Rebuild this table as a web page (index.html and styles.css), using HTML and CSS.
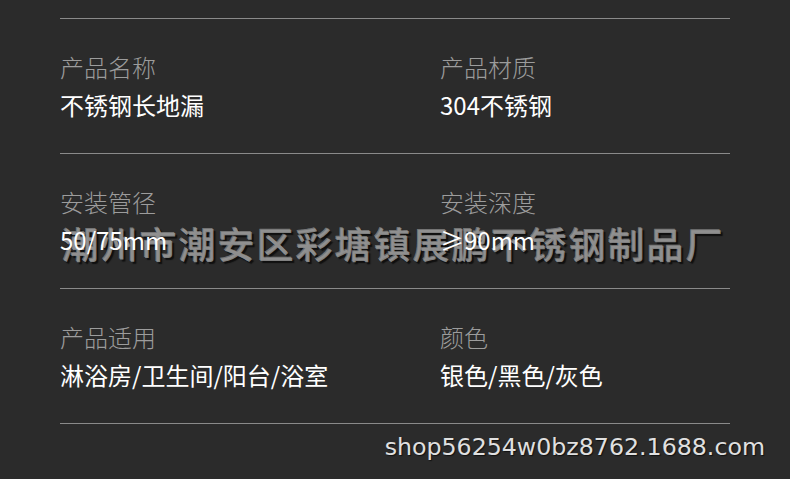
FILE: index.html
```html
<!DOCTYPE html>
<html lang="zh-CN">
  <head>
    <meta charset="UTF-8" />
    <meta name="viewport" content="width=device-width, initial-scale=1.0" />
    <title>产品参数</title>
    <link rel="stylesheet" href="styles.css">
  </head>
  <body>
    <div class="vandmaerke">潮州市潮安区彩塘镇展鹏不锈钢制品厂</div>
    <main class="sheet">
      <section class="rad">
        <div class="felt">
          <p class="navn">产品名称</p>
          <p class="vaerdi">不锈钢长地漏</p>
        </div>
        <div class="felt">
          <p class="navn">产品材质</p>
          <p class="vaerdi">304不锈钢</p>
        </div>
      </section>
      <section class="rad">
        <div class="felt">
          <p class="navn">安装管径</p>
          <p class="vaerdi">50/75mm</p>
        </div>
        <div class="felt">
          <p class="navn">安装深度</p>
          <p class="vaerdi">≥90mm</p>
        </div>
      </section>
      <section class="rad sidste">
        <div class="felt">
          <p class="navn">产品适用</p>
          <p class="vaerdi">淋浴房/卫生间/阳台/浴室</p>
        </div>
        <div class="felt">
          <p class="navn">颜色</p>
          <p class="vaerdi">银色/黑色/灰色</p>
        </div>
      </section>
      <p class="butik">shop56254w0bz8762.1688.com</p>
    </main>
  </body>
</html>
```

FILE: styles.css
```css
body {
  margin: 0;
  background-color: #2b2b2b;
  font-family: "Noto Sans CJK SC", "Noto Sans", sans-serif;
}

.sheet {
  position: relative;
  width: 670px;
  padding: 18px 60px 0 60px;
}

.rad {
  display: grid;
  grid-template-columns: 380px 1fr;
  border-top: 1px solid #8a8a8a;
  padding: 29px 0 29px 0;
}

.sidste {
  border-bottom: 1px solid #8a8a8a;
}

.felt p {
  margin: 0;
  font-size: 24px;
  line-height: 38px;
}

.navn {
  color: #9c9c9c;
  font-weight: 300;
}

.vaerdi {
  color: #ffffff;
}

.butik {
  margin: 6px -35px 0 0;
  text-align: right;
  font-family: "DejaVu Sans", sans-serif;
  font-size: 23.7px;
  line-height: 34px;
  color: #e0e0e0;
  text-shadow: 1px 1px 1px #111;
}

/* ligger bag teksten */
.vandmaerke {
  position: absolute;
  left: 62px;
  top: 216px;
  font-size: 36.8px;
  line-height: 54px;
  font-weight: 500;
  letter-spacing: 2.2px;
  white-space: nowrap;
  color: rgba(150, 150, 150, 0.85);
  text-shadow: -1px -1px 0 rgba(210, 210, 210, 0.45), 2px 2px 1px rgba(10, 10, 10, 0.85);
}
```
